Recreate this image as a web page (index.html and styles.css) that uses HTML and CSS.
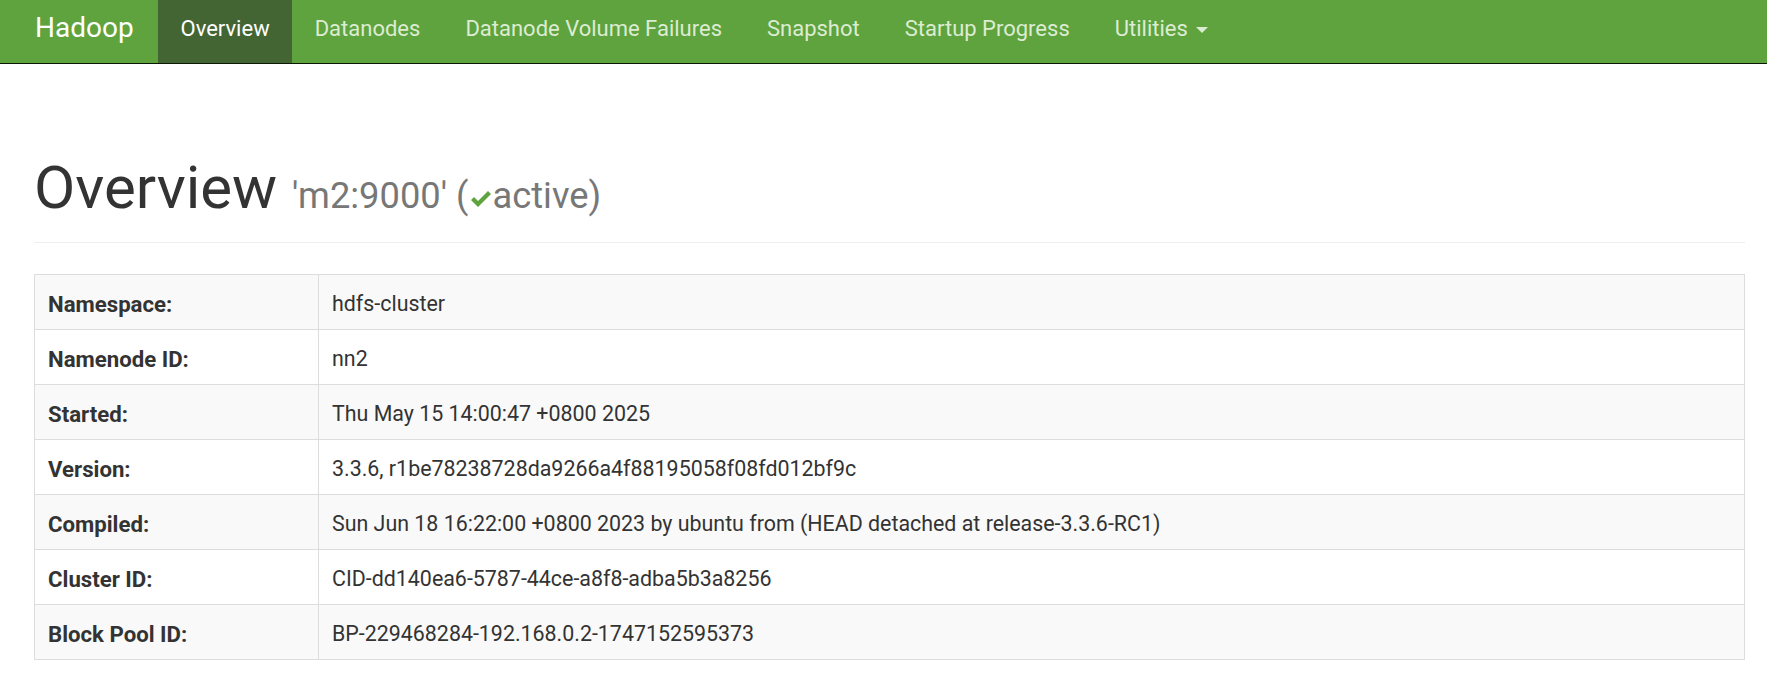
FILE: index.html
```html
<!DOCTYPE html>
<html>
<head>
<meta charset="utf-8">
<title>Namenode information</title>
<link rel="stylesheet" href="styles.css">
</head>
<body>
<nav class="navbar">
  <a class="brand" href="#">Hadoop</a>
  <ul class="nav">
    <li class="active"><a href="#">Overview</a></li>
    <li><a href="#">Datanodes</a></li>
    <li><a href="#">Datanode Volume Failures</a></li>
    <li><a href="#">Snapshot</a></li>
    <li><a href="#">Startup Progress</a></li>
    <li><a href="#">Utilities<span class="caret"></span></a></li>
  </ul>
</nav>
<div class="container">
  <div class="page-header">
    <h1>Overview <small>'m2:9000' (<svg class="ok" viewBox="0 0 20 16" width="20" height="16"><polygon points="0,9 3,6 7,10 17,0 20,3 7,16"/></svg>active)</small></h1>
  </div>
  <table class="table">
    <colgroup><col class="label-col"><col></colgroup>
    <tr><th>Namespace:</th><td>hdfs-cluster</td></tr>
    <tr><th>Namenode ID:</th><td>nn2</td></tr>
    <tr><th>Started:</th><td>Thu May 15 14:00:47 +0800 2025</td></tr>
    <tr><th>Version:</th><td>3.3.6, r1be78238728da9266a4f88195058f08fd012bf9c</td></tr>
    <tr><th>Compiled:</th><td>Sun Jun 18 16:22:00 +0800 2023 by ubuntu from (HEAD detached at release-3.3.6-RC1)</td></tr>
    <tr><th>Cluster ID:</th><td>CID-dd140ea6-5787-44ce-a8f8-adba5b3a8256</td></tr>
    <tr><th>Block Pool ID:</th><td>BP-229468284-192.168.0.2-1747152595373</td></tr>
  </table>
</div>
</body>
</html>
```
FILE: styles.css
```css
html, body {
  margin: 0;
  padding: 0;
  background: #fff;
}
body {
  font-family: Roboto, "Liberation Sans", sans-serif;
  color: #333;
  font-size: 21.4px;
}
a { text-decoration: none; }

.navbar {
  display: flex;
  align-items: flex-start;
  height: 63px;
  background: #5fa33e;
  border-bottom: 1px solid #0b1a06;
  padding-left: 35px;
}
.brand {
  display: block;
  width: 123px;
  font-size: 28px;
  line-height: 55px;
  padding-bottom: 8px;
  color: #fff;
}
.nav {
  display: flex;
  list-style: none;
  margin: 0;
  padding: 0;
}
.nav a {
  display: block;
  padding: 0 22.5px 6px;
  font-size: 22px;
  line-height: 57px;
  color: #dcecd2;
}
.nav .active a {
  background: #436534;
  color: #fff;
}
.caret {
  display: inline-block;
  width: 0;
  height: 0;
  margin-left: 8px;
  vertical-align: middle;
  border-top: 6px solid #dcecd2;
  border-left: 6px solid transparent;
  border-right: 6px solid transparent;
}

.container {
  padding: 0 22px 0 34px;
}
.page-header {
  margin-top: 91px;
  padding-bottom: 22px;
  border-bottom: 1px solid #eee;
}
h1 {
  margin: 0;
  font-size: 60px;
  font-weight: 400;
  line-height: 65px;
  color: #333;
}
h1 small {
  font-size: 36.3px;
  line-height: 1;
  color: #777;
}
.ok {
  fill: #5fa33e;
  vertical-align: 1px;
  margin: 0 1px 0 3px;
}

.table {
  width: 100%;
  margin-top: 31px;
  border-collapse: collapse;
  border: 1px solid #ddd;
}
.label-col { width: 284px; }
.table th, .table td {
  border: 1px solid #ddd;
  padding: 14px 13px 10px;
  line-height: 30px;
  text-align: left;
  vertical-align: top;
}
.table th {
  font-weight: 700;
  font-size: 22.2px;
}
.table tr:nth-child(odd) { background: #f9f9f9; }
```
